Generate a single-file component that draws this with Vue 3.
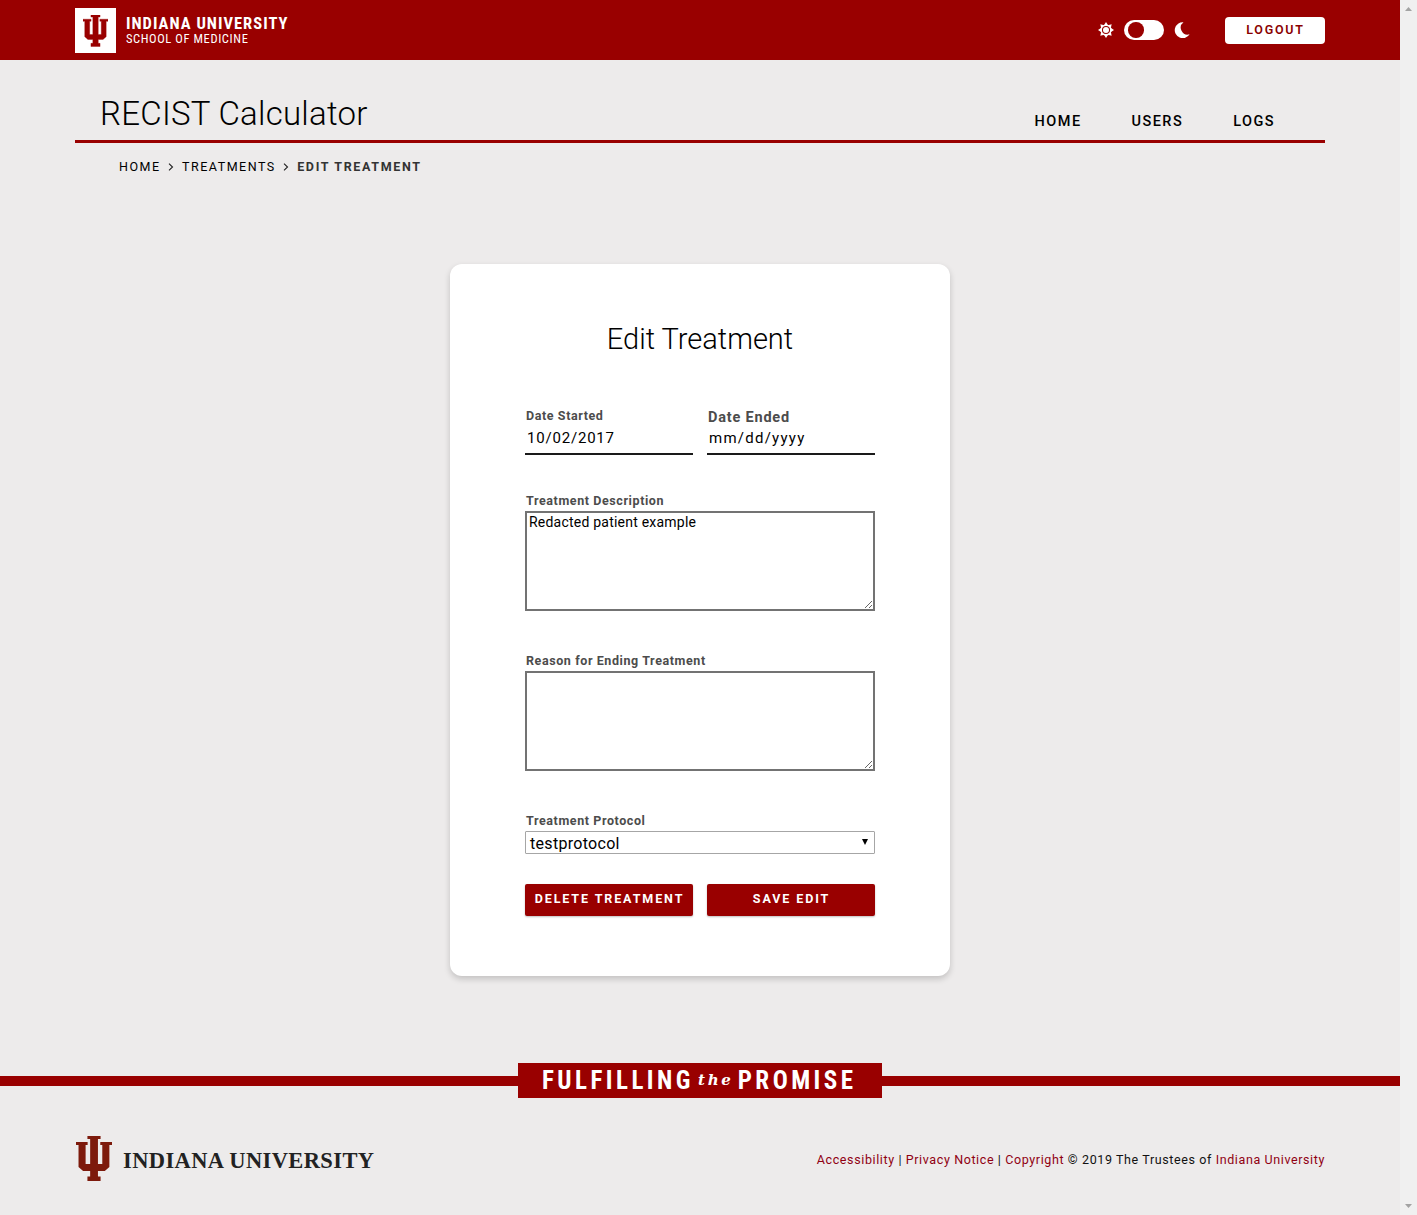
<script setup>
import { ref } from 'vue'

const navLinks = ['HOME', 'USERS', 'LOGS']
const crumbs = ['HOME', 'TREATMENTS']
const description = ref('Redacted patient example')
const reason = ref('')
const trident =
  'M11.3 0H24.3V3H21.7V28H26V9H24V6H35.6V9H33V31L28.5 35H21.7V40.5H24.3V45H11.3V40.5H14V35H7L2.5 31V9H0V6H11.5V9H9.5V28H14V3H11.3Z'
const rays = [0, 45, 90, 135, 180, 225, 270, 315]
</script>

<template>
  <div class="window">
    <div class="page">
      <header class="brand-bar">
        <div class="container brand-row">
          <a class="brand">
            <span class="brand-mark">
              <svg width="25" height="31.5" viewBox="0 0 35.6 45" preserveAspectRatio="none"><path :d="trident" fill="#990000" stroke="#990000" stroke-width="0.5" /></svg>
            </span>
            <span class="brand-text">
              <span class="brand-name">INDIANA UNIVERSITY</span>
              <span class="brand-sub">SCHOOL OF MEDICINE</span>
            </span>
          </a>
          <div class="tools">
            <svg class="sun" width="16" height="16" viewBox="0 0 16 16">
              <path v-for="r in rays" :key="r" d="M5.8 3.4L8 0L10.2 3.4Z" fill="#fff" :transform="`rotate(${r} 8 8)`" />
              <circle cx="8" cy="8" r="4.8" fill="none" stroke="#fff" stroke-width="1.5" />
              <circle cx="8" cy="8" r="3" fill="#fff" />
            </svg>
            <span class="toggle"><span class="knob"></span></span>
            <svg class="moon" width="16" height="16" viewBox="0 0 16 16">
              <path d="M9.5 0.2A8 8 0 1 0 15.6 12.3A6.9 6.9 0 0 1 9.5 0.2Z" fill="#fff" />
            </svg>
            <button class="logout">LOGOUT</button>
          </div>
        </div>
      </header>

      <div class="container title-row">
        <h1>RECIST Calculator</h1>
        <nav>
          <a v-for="l in navLinks" :key="l">{{ l }}</a>
        </nav>
      </div>

      <div class="container crumbs">
        <template v-for="c in crumbs" :key="c">
          <a>{{ c }}</a>
          <svg width="6" height="8" viewBox="0 0 6 8"><path d="M1 0.7L4.5 4L1 7.3" fill="none" stroke="#222" stroke-width="1.1" /></svg>
        </template>
        <strong>EDIT TREATMENT</strong>
      </div>

      <main class="card">
        <h2>Edit Treatment</h2>
        <div class="pair dates">
          <div class="date">
            <label>Date Started</label>
            <div class="date-value started">10/02/2017</div>
          </div>
          <div class="date">
            <label class="large">Date Ended</label>
            <div class="date-value ended">mm/dd/yyyy</div>
          </div>
        </div>
        <div class="field">
          <label>Treatment Description</label>
          <textarea v-model="description"></textarea>
        </div>
        <div class="field">
          <label>Reason for Ending Treatment</label>
          <textarea v-model="reason"></textarea>
        </div>
        <div class="field">
          <label>Treatment Protocol</label>
          <div class="select">
            <span>testprotocol</span>
            <svg width="6" height="6" viewBox="0 0 6 6"><path d="M0 0H6L3 6Z" fill="#000" /></svg>
          </div>
        </div>
        <div class="pair actions">
          <button>DELETE TREATMENT</button>
          <button>SAVE EDIT</button>
        </div>
      </main>

      <div class="promise">
        <div class="promise-line"></div>
        <div class="promise-box"><span>FULFILLING</span><i>the</i><span>PROMISE</span></div>
        <div class="promise-line"></div>
      </div>

      <footer class="container footer">
        <div class="footer-brand">
          <svg width="36" height="45" viewBox="0 0 35.6 45" preserveAspectRatio="none"><path :d="trident" fill="#7d1a0c" /></svg>
          <span>INDIANA UNIVERSITY</span>
        </div>
        <p><a>Accessibility</a> | <a>Privacy Notice</a> | <a>Copyright</a> © 2019 The Trustees of <a>Indiana University</a></p>
      </footer>
    </div>
    <aside class="scrollbar">
      <svg width="7" height="4" viewBox="0 0 7 4"><path d="M0 4L3.5 0L7 4Z" fill="#a3a3a3" /></svg>
      <svg width="7" height="4" viewBox="0 0 7 4"><path d="M0 0H7L3.5 4Z" fill="#a3a3a3" /></svg>
    </aside>
  </div>
</template>

<style>
body { background: #edebeb; }
</style>

<style scoped>
* { box-sizing: border-box; }
.window {
  display: flex;
  width: 1417px;
  height: 1215px;
  overflow: hidden;
  background: #edebeb;
  font-family: Roboto, 'Liberation Sans', sans-serif;
  font-size: 12.5px;
  color: #000;
  white-space: nowrap;
}
.page { width: 1400px; display: flex; flex-direction: column; }
.container { width: 1250px; margin: 0 auto; }
button { font-family: inherit; border: 0; padding: 0; margin: 0; }

.brand-bar { height: 60px; background: #990000; }
.brand-row { display: flex; justify-content: space-between; height: 60px; }
.brand { display: flex; align-items: flex-start; padding-top: 8px; color: #fff; }
.brand-mark { width: 41px; height: 45px; background: #fff; display: flex; padding: 7px 0 0 8px; }
.brand-text { display: flex; flex-direction: column; margin-left: 10px; font-family: 'Roboto Condensed', Roboto, sans-serif; }
.brand-name { font-size: 16.5px; font-weight: 700; line-height: 20px; letter-spacing: 1.02px; margin-top: 6px; }
.brand-sub { font-size: 12.5px; line-height: 12px; letter-spacing: 0.6px; margin-top: -1px; }
.tools { display: flex; align-items: center; }
.toggle { width: 40px; height: 20px; border-radius: 10px; background: #fff; margin: 0 10px; padding: 2px 4px; }
.knob { display: block; width: 15.5px; height: 15.5px; border-radius: 50%; background: #990000; }
.logout {
  width: 100px; height: 27px; margin: 1px 0 0 35px; border-radius: 4px; background: #fff; color: #8a0000;
  font-size: 12.5px; font-weight: 600; letter-spacing: 1.75px; line-height: 25px; padding-bottom: 2px; text-indent: 1px;
}

.title-row {
  display: flex; justify-content: space-between; height: 83px; border-bottom: 3px solid #990000;
  padding: 34px 50px 0 25px;
}
h1 { margin: 0; font-size: 33px; font-weight: 300; line-height: 40px; letter-spacing: 0.25px; }
nav { display: flex; gap: 50px; padding-top: 17px; }
nav a { font-size: 14.5px; font-weight: 500; line-height: 21px; letter-spacing: 1.45px; }

.crumbs { display: flex; align-items: center; height: 21px; margin-top: 13px; padding-left: 44px; letter-spacing: 1.5px; }
.crumbs svg { margin: 0 8.5px 0 7px; }
.crumbs strong { color: #333; letter-spacing: 1.65px; }

.card {
  width: 500px; height: 712px; margin: 87px auto 0; padding: 55px 75px 0; border-radius: 12px;
  background: #fff; box-shadow: 0 3px 6px rgba(0, 0, 0, 0.18);
}
h2 { margin: 0; font-size: 29px; font-weight: 300; line-height: 40px; text-align: center; }
.pair { display: flex; gap: 14px; }
.dates { margin-top: 47px; }
.date { width: 168px; height: 49px; display: flex; flex-direction: column; justify-content: space-between; }
label { display: block; padding-left: 1px; font-weight: 700; color: #4c4c4c; line-height: 19px; letter-spacing: 0.59px; }
label.large { font-size: 14.5px; line-height: 24px; letter-spacing: 0.8px; }
.date-value {
  height: 27px; margin-top: -5px; padding: 1px 0 0 2px; border-bottom: 2px solid #1a1a1a; font-size: 15px; line-height: 19px;
}
.started { letter-spacing: 0.8px; }
.ended { letter-spacing: 1.25px; }
.field { display: flex; flex-direction: column; gap: 1px; margin-top: 40px; }
.dates + .field { margin-top: 36px; }
textarea {
  display: block; width: 350px; height: 100px; margin: 0; border: 2px solid #737373; border-radius: 0; padding: 0 2px;
  background: #fff; color: #000; font: 14px/18px Roboto, sans-serif; letter-spacing: 0.22px; resize: both; outline: none;
}
.select {
  display: flex; justify-content: space-between; height: 23px; border: 1px solid #a6a6a6; border-radius: 1px;
  padding: 0 6px 0 4px; font-size: 16px; line-height: 23px; letter-spacing: 0.3px;
}
.select svg { margin-top: 7px; }
.actions { margin-top: 30px; }
.actions button {
  width: 168px; height: 32px; border-radius: 2px; background: #990000; color: #fff; font-size: 12.5px; font-weight: 700;
  letter-spacing: 1.9px; line-height: 29px; padding-bottom: 3px; text-indent: 1px; box-shadow: 0 1px 2px rgba(0, 0, 0, 0.25);
}

.promise { display: flex; align-items: center; height: 35px; margin-top: 87px; }
.promise-line { flex: 1; height: 10px; background: #990000; margin-top: 1px; }
.promise-box {
  display: flex; width: 364px; height: 35px; padding-left: 24px; background: #990000; color: #fff;
  font: 700 25px/35px 'Roboto Condensed', Roboto, sans-serif; letter-spacing: 3.45px;
}
.promise-box i { font: italic 700 15px/35px 'DejaVu Serif', serif; letter-spacing: 2.8px; margin: 0 4px 0 4px; }

.footer { display: flex; justify-content: space-between; align-items: center; height: 45px; margin-top: 38px; }
.footer-brand { display: flex; align-items: center; padding-left: 1px; gap: 11px; }
.footer-brand span { font: 700 22.5px/45px 'Liberation Serif', serif; letter-spacing: 0.39px; color: #222; padding-top: 2px; height: 45px; }
.footer p { margin: 0; line-height: 20px; letter-spacing: 0.61px; padding-top: 2px; color: #111; }
.footer a { color: #900012; }

.scrollbar { width: 17px; display: flex; flex-direction: column; justify-content: space-between; padding: 7px 5px; background: #f0f0f0; }
</style>
